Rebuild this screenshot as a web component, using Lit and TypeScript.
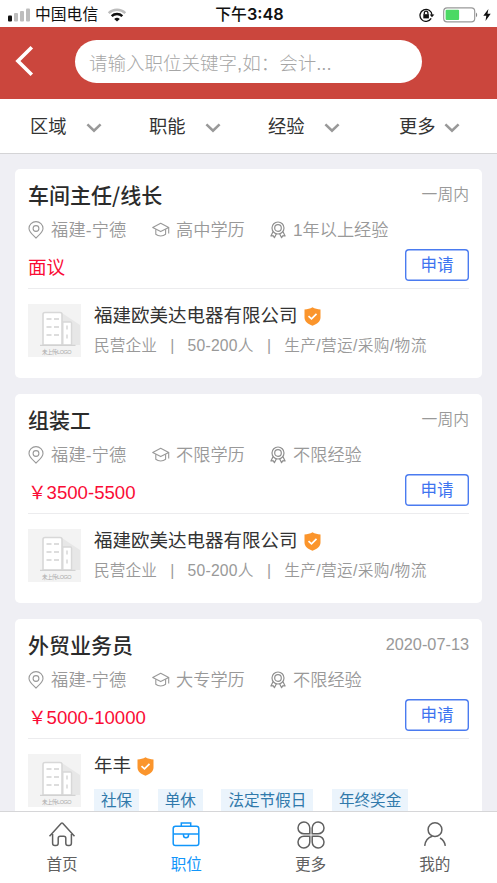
import { LitElement, html, css, svg, nothing } from "lit";
import { customElement, property } from "lit/decorators.js";

interface Job {
  title: string;
  date: string;
  place: string;
  degree: string;
  experience: string;
  salary: string;
  company: string;
  facts?: string[];
  tags?: string[];
}

const jobs: Job[] = [
  {
    title: "车间主任/线长", date: "一周内", place: "福建-宁德", degree: "高中学历",
    experience: "1年以上经验", salary: "面议", company: "福建欧美达电器有限公司",
    facts: ["民营企业", "50-200人", "生产/营运/采购/物流"],
  },
  {
    title: "组装工", date: "一周内", place: "福建-宁德", degree: "不限学历",
    experience: "不限经验", salary: "￥3500-5500", company: "福建欧美达电器有限公司",
    facts: ["民营企业", "50-200人", "生产/营运/采购/物流"],
  },
  {
    title: "外贸业务员", date: "2020-07-13", place: "福建-宁德", degree: "大专学历",
    experience: "不限经验", salary: "￥5000-10000", company: "年丰",
    tags: ["社保", "单休", "法定节假日", "年终奖金"],
  },
];

const pinIcon = html`<svg width="16" height="18" viewBox="0 0 16 18" fill="none" stroke="#999" stroke-width="1.1">
  <path d="M8 17C5.500 14.400 1 11 1 7.400a7 6.800 0 0 1 14 0C15 11 10.500 14.400 8 17Z" />
  <circle cx="8" cy="7.500" r="2.900" />
</svg>`;

const capIcon = html`<svg width="19" height="16" viewBox="0 0 19 16" fill="none" stroke="#999" stroke-width="1.1" stroke-linejoin="round">
  <path d="M.7 5.500 8.700 1.200 16.700 5.500 8.700 9.600Z" />
  <path d="M3.800 7.300v5c2.700 2.200 7.100 2.200 9.800 0v-5M16.700 5.500v6" />
</svg>`;

const medalIcon = html`<svg width="16" height="18" viewBox="0 0 16 18" fill="none" stroke="#8f8f8f" stroke-width="1.200" stroke-linejoin="round">
  <circle cx="8" cy="7" r="6" />
  <circle cx="8" cy="7" r="3.300" />
  <path d="M3 10.800.9 15l2.300-.3 1.200 2 2-4M13 10.800 15.100 15l-2.300-.3-1.200 2-2-4" />
</svg>`;

const shieldIcon = html`<svg width="17" height="19" viewBox="0 0 17 19">
  <path d="M8.500.3c2.300 1.500 5 2 8 2.200v8c0 4-3.500 6.600-8 8.200-4.500-1.600-8-4.200-8-8.200v-8c3-.2 5.700-.7 8-2.200Z" fill="#fb952c" />
  <path d="m4.500 9.200 3 2.700 5-5" fill="none" stroke="#fff" stroke-width="1.700" />
</svg>`;

const chevron = html`<svg width="16" height="10" viewBox="0 0 16 10">
  <path d="m1.400 1.400 6.600 6.200 6.600-6.200" fill="none" stroke="#999" stroke-width="2.600" />
</svg>`;

@customElement("status-bar")
class StatusBar extends LitElement {
  static styles = css`
    :host {
      display: grid;
      grid-template-columns: 1fr auto 1fr;
      align-items: center;
      height: 27px;
      padding: 0 6px 1px 8px;
      box-sizing: border-box;
      background: #fff;
      color: #111;
      font-size: 15.800px;
    }
    .side { display: flex; align-items: center; }
    .carrier { margin: 0 9px 0 4px; line-height: 28px; }
    .time { font-weight: 500; line-height: 28px; font-family: Inter, "Noto Sans CJK SC", sans-serif; }
    .clock { font-weight: 600; font-size: 16.300px; }
    .end { justify-content: flex-end; gap: 5px; }
    .battery { margin-left: 3px; }
    svg { display: block; }
  `;
  render() {
    return html`
      <div class="side">
        <svg width="23" height="14" viewBox="0 0 23 14" fill="#bdbdbd">
          <rect x="0" y="7.500" width="4" height="6" rx="1" fill="#111" />
          <rect x="6" y="5" width="4" height="8.500" rx="1" />
          <rect x="12" y="3" width="4" height="10.500" rx="1" />
          <rect x="18" y=".5" width="4" height="13" rx="1" />
        </svg>
        <span class="carrier">中国电信</span>
        <svg width="20" height="14" viewBox="0 0 20 14" fill="none" stroke-width="2.500">
          <path d="M1.700 5.200a12 12 0 0 1 16.600 0" stroke="#bdbdbd" />
          <path d="M4.700 8.200a7.700 7.700 0 0 1 10.600 0" stroke="#111" />
          <path d="M7.200 10.900a4.300 4.300 0 0 1 5.600 0L10 13.600Z" fill="#111" />
        </svg>
      </div>
      <span class="time">下午<span class="clock">3:48</span></span>
      <div class="side end">
        <svg width="16" height="14" viewBox="0 0 16 14" fill="none" stroke="#111" stroke-width="1.300">
          <path d="M12.200 10.400A6 6 0 1 1 13 7" />
          <path d="M10.600 6.400h4.800L13 9.200Z" fill="#111" stroke="none" />
          <rect x="4.300" y="6.200" width="5.600" height="4.200" fill="#111" stroke="none" />
          <path d="M5.300 6.500V5a1.800 1.800 0 0 1 3.600 0v1.500" />
        </svg>
        <svg class="battery" width="35" height="16" viewBox="0 0 35 16">
          <rect x=".7" y=".9" width="31" height="14" rx="3.400" fill="#fff" stroke="#999" stroke-width="1.200" />
          <rect x="2.600" y="2.800" width="13.500" height="10.200" rx="1" fill="#4cd964" />
          <path d="M33 5.500c1.600.8 1.600 4 0 4.800Z" fill="#888" />
        </svg>
        <svg width="8" height="12" viewBox="0 0 8 12"><path d="M5.400 0 .3 6.800h3L2.500 12l5.200-7.200H4.500Z" fill="#111" /></svg>
      </div>
    `;
  }
}

@customElement("search-header")
class SearchHeader extends LitElement {
  static styles = css`
    :host {
      display: flex;
      align-items: center;
      height: 72px;
      padding-left: 15px;
      background: #cb463d;
      box-sizing: border-box;
    }
    .back { display: block; margin: -5px 41px 0 0; }
    .field {
      width: 347px;
      height: 43px;
      margin-top: -3px;
      padding-left: 14px;
      box-sizing: border-box;
      border-radius: 22px;
      background: #fff;
      color: #a6a6a6;
      font-size: 18.500px;
      line-height: 48px;
      font-weight: 300;
      white-space: nowrap;
    }
  `;
  render() {
    return html`
      <svg class="back" width="19" height="30" viewBox="0 0 19 30">
        <path d="M16.800 1.300 2.900 15l13.900 13.700" fill="none" stroke="#fff" stroke-width="3.600" />
      </svg>
      <div class="field">请输入职位关键字,如：会计...</div>
    `;
  }
}

@customElement("filter-bar")
class FilterBar extends LitElement {
  static styles = css`
    :host {
      display: grid;
      grid-template-columns: 119px 119px 131px auto;
      align-items: center;
      height: 55px;
      padding-left: 30px;
      box-sizing: border-box;
      background: #fff;
      border-bottom: 1px solid #d4d4d6;
      color: #333;
      font-size: 18.300px;
      line-height: 52px;
    }
    .filter { display: flex; align-items: center; gap: 19px; }
    .filter:last-child { gap: 8px; }
    span { margin-top: 2px; }
    svg { display: block; margin-top: 3px; }
  `;
  render() {
    return ["区域", "职能", "经验", "更多"].map(
      (name) => html`<div class="filter"><span>${name}</span>${chevron}</div>`
    );
  }
}

@customElement("company-logo")
class CompanyLogo extends LitElement {
  static styles = css`
    :host { display: block; width: 53px; height: 53px; }
    svg { display: block; }
    text { font: 5.500px "Liberation Sans", "Noto Sans CJK SC", sans-serif; fill: #aaa; }
  `;
  render() {
    const windows = [15, 23, 31].map(
      (y) => svg`<path d="M18.500 ${y}h5M26 ${y}h5" stroke="#d2d2d2" stroke-width="1.300" />`
    );
    return html`<svg width="53" height="53" viewBox="0 0 53 53">
      <rect width="53" height="53" fill="#f3f3f3" />
      <path d="M34 9 52 21v20H34Z" fill="#e7e7e7" />
      <path d="M15 41V10.500Q15 8.500 17 8.500H32Q34 8.500 34 10.500V41Z" fill="#fff" stroke="#d8d8d8" stroke-width="1.600" />
      <path d="M34.800 18H42.500Q43.500 18 43.500 19V41H34.800Z" fill="#fff" stroke="#d8d8d8" stroke-width="1.400" />
      ${windows}
      <path d="M39 21.500v4M39 30.500v4" stroke="#d2d2d2" stroke-width="1.300" />
      <path d="M12 41.300h35.500" stroke="#d2d2d2" stroke-width="1.300" />
      <text x="14" y="50" textLength="29.500">未上传LOGO</text>
    </svg>`;
  }
}

@customElement("job-card")
class JobCard extends LitElement {
  @property({ attribute: false }) job!: Job;

  static styles = css`
    :host {
      display: block;
      flex: none;
      height: 209px;
      box-sizing: border-box;
      padding: 7px 13px 0;
      border-radius: 5px;
      background: #fff;
      color: #333;
      white-space: nowrap;
    }
    svg { display: block; flex: none; }
    .head { display: flex; justify-content: space-between; height: 40px; line-height: 40px; }
    .title { font-size: 21px; line-height: 36px; font-weight: 500; color: #2b2b2b; font-family: "Noto Sans CJK SC", sans-serif; }
    .date { font-size: 15.800px; color: #999; line-height: 38px; font-weight: 350; }
    .date.numeric { font-size: 16.300px; line-height: 37px; }
    .meta {
      display: grid;
      grid-template-columns: 124px 118px auto;
      height: 28px;
      line-height: 28px;
      font-size: 17.200px;
      color: #999;
      font-weight: 350;
    }
    .item { display: flex; align-items: center; gap: 7px; }
    .item.place { letter-spacing: .2px; }
    .item.cap { gap: 5px; }
    .pay {
      display: flex;
      justify-content: space-between;
      height: 45px;
      box-sizing: border-box;
      border-bottom: 1px solid #ececee;
    }
    .salary { color: #fa0c35; font-size: 18.600px; line-height: 48px; }
    .apply {
      width: 64px;
      height: 32px;
      margin-top: 5px;
      box-sizing: border-box;
      box-shadow: inset 0 0 0 1.400px #4a7bf0;
      border-radius: 4px;
      color: #3e74f0;
      font-size: 16.500px;
      line-height: 33px;
      text-align: center;
    }
    .company { display: flex; gap: 13px; margin-top: 15px; }
    .name { display: flex; align-items: center; gap: 6px; height: 24px; font-size: 18.500px; line-height: 24px; }
    .facts { display: flex; height: 36px; line-height: 36px; font-size: 15.700px; color: #999; font-weight: 350; letter-spacing: .05px; }
    .facts .text:nth-of-type(3) { letter-spacing: .25px; }
    .facts .text:last-child { letter-spacing: .35px; }
    .bar { width: 30.500px; text-align: center; }
    .tags { display: flex; gap: 18.500px; margin-top: 11px; }
    .tag { padding: 0 7px; height: 25px; line-height: 24px; background: #ebf4fc; color: #3079ab; font-size: 15.600px; }
  `;

  render() {
    const j = this.job;
    const numeric = /^\d/.test(j.date) ? "numeric" : "";
    return html`
      <div class="head"><span class="title">${j.title}</span><span class="date ${numeric}">${j.date}</span></div>
      <div class="meta">
        <span class="item place">${pinIcon}${j.place}</span>
        <span class="item cap">${capIcon}${j.degree}</span>
        <span class="item">${medalIcon}${j.experience}</span>
      </div>
      <div class="pay"><span class="salary">${j.salary}</span><div class="apply">申请</div></div>
      <div class="company">
        <company-logo></company-logo>
        <div>
          <div class="name">${j.company}${shieldIcon}</div>
          ${j.facts
            ? html`<div class="facts">
                ${j.facts.map((f, i) => html`${i ? html`<span class="bar">|</span>` : nothing}<span class="text">${f}</span>`)}
              </div>`
            : nothing}
          ${j.tags ? html`<div class="tags">${j.tags.map((t) => html`<span class="tag">${t}</span>`)}</div>` : nothing}
        </div>
      </div>
    `;
  }
}

const tabs = [
  {
    label: "首页",
    icon: svg`<path d="M1.500 15.200 13.300 2.300q.7-.7 1.400 0L26.500 15.200M4.600 13v9.200q0 2.300 2.300 2.300h1q2.300 0 2.300-2.300v-5q0-2 2-2h3.600q2 0 2 2v5q0 2.300 2.300 2.300h1q2.300 0 2.300-2.300V13" />`,
  },
  {
    label: "职位",
    icon: svg`<rect x="1.200" y="5.200" width="25.600" height="19.300" rx="2.300" /><path d="M9.300 5V2h9.400v3M1.200 13h25.600M11.500 13v1.200a2.500 2.500 0 0 0 5 0V13" />`,
  },
  {
    label: "更多",
    icon: svg`<path d="M12.800 12.800H7a5.900 5.900 0 1 1 5.800-5.900ZM15.200 12.800V6.900a5.900 5.900 0 1 1 5.800 5.900ZM12.800 15.200v5.900A5.900 5.900 0 1 1 7 15.200ZM15.200 15.200H21a5.900 5.900 0 1 1-5.800 5.900Z" />`,
  },
  {
    label: "我的",
    icon: svg`<circle cx="14" cy="8.700" r="6.900" /><path d="M11.200 15.200C7 16.500 4.200 20 3.700 24.800M19 17c3 1.700 4.800 4.300 5.300 7.800" />`,
  },
];

@customElement("tab-bar")
class TabBar extends LitElement {
  static styles = css`
    :host {
      display: grid;
      grid-template-columns: repeat(4, 1fr);
      height: 72px;
      box-sizing: border-box;
      background: #fff;
      border-top: 1px solid #d6d6d8;
    }
    .tab {
      display: flex;
      flex-direction: column;
      align-items: center;
      padding-top: 9px;
      color: #606060;
      font-size: 15.600px;
      line-height: 31px;
    }
    .active { color: #1296fa; }
    svg { display: block; fill: none; stroke: currentColor; stroke-width: 1.500; }
  `;
  render() {
    return tabs.map(
      (t) => html`<div class="tab ${t.label === "职位" ? "active" : ""}">
        <svg width="28" height="28" viewBox="0 0 28 28">${t.icon}</svg>
        <span>${t.label}</span>
      </div>`
    );
  }
}

@customElement("app-root")
class AppRoot extends LitElement {
  static styles = css`
    :host {
      display: flex;
      flex-direction: column;
      height: 883px;
      overflow: hidden;
      background: #efeff4;
      font-family: "Liberation Sans", "Noto Sans CJK SC", sans-serif;
    }
    .list {
      flex: 1;
      min-height: 0;
      overflow: hidden;
      display: flex;
      flex-direction: column;
      gap: 16px;
      padding: 15px 15px 0;
    }
  `;
  render() {
    return html`
      <status-bar></status-bar>
      <search-header></search-header>
      <filter-bar></filter-bar>
      <div class="list">${jobs.map((job) => html`<job-card .job=${job}></job-card>`)}</div>
      <tab-bar></tab-bar>
    `;
  }
}
